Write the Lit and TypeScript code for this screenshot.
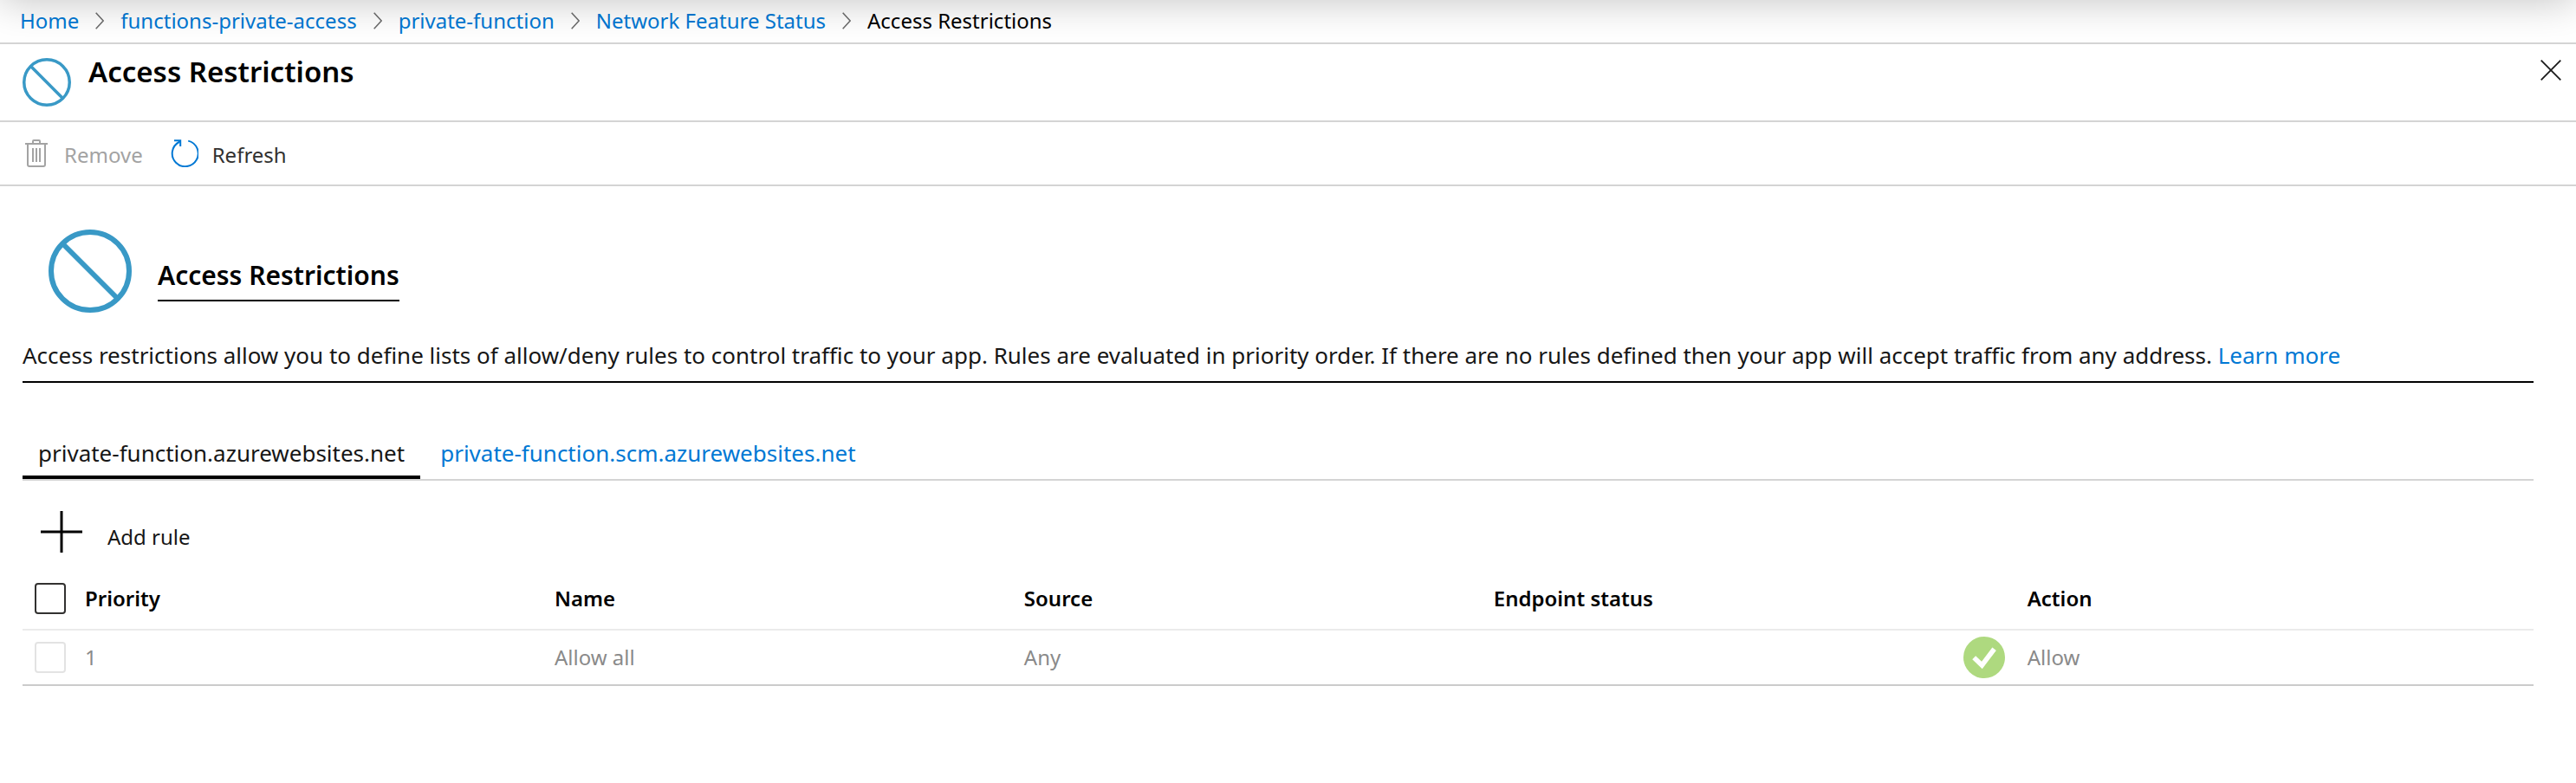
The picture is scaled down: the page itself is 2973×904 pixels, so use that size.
import { LitElement, html, css, svg } from "lit";
import { customElement, property, state } from "lit/decorators.js";
import { classMap } from "lit/directives/class-map.js";

interface Rule {
  priority: number;
  name: string;
  source: string;
  endpointStatus: string;
  action: string;
}

const CRUMBS = ["Home", "functions-private-access", "private-function", "Network Feature Status"];
const TABS = ["private-function.azurewebsites.net", "private-function.scm.azurewebsites.net"];
const RULES: Rule[] = [
  { priority: 1, name: "Allow all", source: "Any", endpointStatus: "", action: "Allow" },
];

const chevronIcon = svg`<path d="M0.7 0.7 L9.2 10 L0.7 19.3" fill="none" stroke="#6e6e6e" stroke-width="1.6"/>`;

const closeIcon = svg`<path d="M0.7 0.7 L23.3 23.3 M23.3 0.7 L0.7 23.3" fill="none" stroke="#1b1b1b" stroke-width="1.8"/>`;

const trashIcon = svg`
  <g fill="none" stroke="#a3a3a3" stroke-width="2">
    <path d="M3 5 H29"/>
    <path d="M12 4.5 V2 Q12 1 13 1 H19 Q20 1 20 2 V4.5"/>
    <path d="M6 5 V29 Q6 31 8 31 H24 Q26 31 26 29 V5"/>
    <path d="M12 10 V26 M16 10 V26 M20 10 V26"/>
  </g>`;

const refreshIcon = svg`
  <g fill="none" stroke="#0078d4" stroke-width="2">
    <path d="M20.2 1.6 A15 15 0 1 1 9.6 3 L11 1.6"/>
    <path d="M4 1.2 H11.2 V8"/>
  </g>`;

const plusIcon = svg`<path d="M0 24 H48 M24 0 V48" fill="none" stroke="#000" stroke-width="3"/>`;

const checkIcon = svg`
  <circle cx="24" cy="24" r="24" fill="#aed97f"/>
  <path d="M12.2 24.2 L21.4 33 L35.6 14.2" fill="none" stroke="#fff" stroke-width="5.6"/>`;

@customElement("blocked-icon")
class BlockedIcon extends LitElement {
  static styles = css`
    :host { display: block; flex: none; }
    .glyph { display: block; width: 100%; height: 100%; }
  `;
  render() {
    return html`<svg class="glyph" viewBox="0 0 96 96" aria-hidden="true">
      <circle cx="48" cy="48" r="45" fill="none" stroke="#3999c6" stroke-width="6"/>
      <path d="M16 16 L80 80" fill="none" stroke="#3999c6" stroke-width="6"/>
    </svg>`;
  }
}

@customElement("rules-table")
class RulesTable extends LitElement {
  @property({ attribute: false }) rules: Rule[] = [];

  static styles = css`
    :host { display: block; }
    .table {
      width: 100%;
      table-layout: fixed;
      border-collapse: separate;
      border-spacing: 0;
      font-size: 24px;
      line-height: 32px;
      text-align: left;
    }
    .select { width: 72px; }
    .field { width: 18.7%; }
    .head { height: 70px; padding: 0; font-weight: 600; color: #000; border-bottom: 2px solid #ebebeb; }
    .cell { height: 62px; padding: 0; color: #8a8a8a; border-bottom: 2px solid #cbcbcb; }
    .head.action { padding-left: 74px; }
    .verdict { display: flex; align-items: center; gap: 26px; }
    .mark { width: 48px; height: 48px; flex: none; }
    .check {
      appearance: none;
      display: block;
      box-sizing: border-box;
      width: 36px;
      height: 36px;
      margin: 0 0 0 14px;
      border: 2px solid #323130;
      border-radius: 4px;
      background: #fff;
    }
    .check:disabled { border-color: #e3e3e3; }
  `;

  render() {
    return html`<table class="table">
      <thead>
        <tr>
          <th class="head select"><input class="check" type="checkbox" aria-label="Select all rules"></th>
          <th class="head field">Priority</th>
          <th class="head field">Name</th>
          <th class="head field">Source</th>
          <th class="head field">Endpoint status</th>
          <th class="head action">Action</th>
        </tr>
      </thead>
      <tbody>
        ${this.rules.map((r) => html`<tr>
          <td class="cell"><input class="check" type="checkbox" disabled aria-label="Select rule ${r.name}"></td>
          <td class="cell">${r.priority}</td>
          <td class="cell">${r.name}</td>
          <td class="cell">${r.source}</td>
          <td class="cell">${r.endpointStatus}</td>
          <td class="cell">
            <div class="verdict">
              <svg class="mark" viewBox="0 0 48 48" aria-hidden="true">${checkIcon}</svg>
              <span>${r.action}</span>
            </div>
          </td>
        </tr>`)}
      </tbody>
    </table>`;
  }
}

@customElement("app-root")
class AppRoot extends LitElement {
  @state() private activeTab = 0;

  static styles = css`
    :host {
      display: block;
      min-height: 100vh;
      background: #fff;
      color: #161616;
      font-family: "Segoe UI", "Noto Sans", "Open Sans", sans-serif;
      font-size: 24px;
    }
    button {
      margin: 0;
      padding: 0;
      border: 0;
      background: none;
      color: inherit;
      font: inherit;
      cursor: pointer;
    }
    .link { color: #0078d4; text-decoration: none; }

    .crumbs {
      position: relative;
      overflow: hidden;
      display: flex;
      align-items: center;
      gap: 19px;
      padding: 0 23px 1px;
      border-bottom: 2px solid #d4d4d4;
      line-height: 48px;
      white-space: nowrap;
    }
    .crumbs::before {
      content: "";
      position: absolute;
      inset: -60px 0 100%;
      box-shadow: 0 0 48px rgba(0, 0, 0, 0.25);
      pointer-events: none;
    }
    .chevron { width: 10px; height: 20px; flex: none; }
    .current { color: #000; }

    .header {
      display: flex;
      align-items: flex-start;
      gap: 20px;
      padding: 16px 17px 16px 26px;
      border-bottom: 2px solid #d4d4d4;
    }
    .icon-small { width: 56px; height: 56px; }
    .title { flex: 1; margin: 0; font-size: 33px; font-weight: 600; line-height: 32px; color: #000; }
    .close { display: flex; align-items: center; height: 28px; }
    .cross { width: 24px; height: 24px; }

    .toolbar {
      display: flex;
      gap: 32px;
      padding: 20px 26px;
      border-bottom: 2px solid #d4d4d4;
    }
    .command { display: flex; align-items: flex-end; gap: 16px; line-height: 28px; color: #323130; }
    .command:disabled { color: #a3a3a3; cursor: default; }
    .command-icon { width: 32px; height: 32px; }

    .content { padding: 50px 49px 50px 26px; }
    .banner { display: flex; align-items: flex-end; gap: 30px; padding-left: 30px; }
    .icon-large { width: 96px; height: 96px; }
    .banner-title {
      margin: 0 0 13px;
      padding-bottom: 12px;
      border-bottom: 2px solid #000;
      font-size: 30px;
      font-weight: 600;
      line-height: 32px;
      color: #000;
    }
    .intro {
      margin: 31px 0 0;
      padding-bottom: 12px;
      border-bottom: 2px solid #000;
      font-size: 26px;
      line-height: 36px;
    }

    .tabs {
      display: flex;
      gap: 5px;
      margin-top: 63px;
      border-bottom: 2px solid #d4d4d4;
      font-size: 26px;
      line-height: 36px;
    }
    .tab { padding: 0 18px 8px; border-bottom: 4px solid transparent; color: #0078d4; }
    .tab.active { border-color: #000; color: #161616; }

    .add { display: flex; align-items: flex-end; gap: 29px; margin: 35px 0 18px 21px; line-height: 36px; }
    .plus { width: 48px; height: 48px; }
  `;

  render() {
    return html`
      <nav class="crumbs" aria-label="Breadcrumb">
        ${CRUMBS.map((c) => html`<a class="link" href="#">${c}</a><svg class="chevron" viewBox="0 0 10 20" aria-hidden="true">${chevronIcon}</svg>`)}
        <span class="current">Access Restrictions</span>
      </nav>
      <header class="header">
        <blocked-icon class="icon-small"></blocked-icon>
        <h1 class="title">Access Restrictions</h1>
        <button class="close" aria-label="Close"><svg class="cross" viewBox="0 0 24 24">${closeIcon}</svg></button>
      </header>
      <div class="toolbar" role="toolbar">
        <button class="command" disabled><svg class="command-icon" viewBox="0 0 32 32">${trashIcon}</svg>Remove</button>
        <button class="command"><svg class="command-icon" viewBox="0 0 32 32">${refreshIcon}</svg>Refresh</button>
      </div>
      <main class="content">
        <div class="banner">
          <blocked-icon class="icon-large"></blocked-icon>
          <h2 class="banner-title">Access Restrictions</h2>
        </div>
        <p class="intro">Access restrictions allow you to define lists of allow/deny rules to control traffic to your app. Rules are evaluated in priority order. If there are no rules defined then your app will accept traffic from any address. <a class="link" href="#">Learn more</a></p>
        <div class="tabs" role="tablist">
          ${TABS.map((t, i) => html`<button role="tab" aria-selected=${i === this.activeTab} class=${classMap({ tab: true, active: i === this.activeTab })} @click=${() => (this.activeTab = i)}>${t}</button>`)}
        </div>
        <button class="add"><svg class="plus" viewBox="0 0 48 48">${plusIcon}</svg>Add rule</button>
        <rules-table .rules=${RULES}></rules-table>
      </main>
    `;
  }
}
